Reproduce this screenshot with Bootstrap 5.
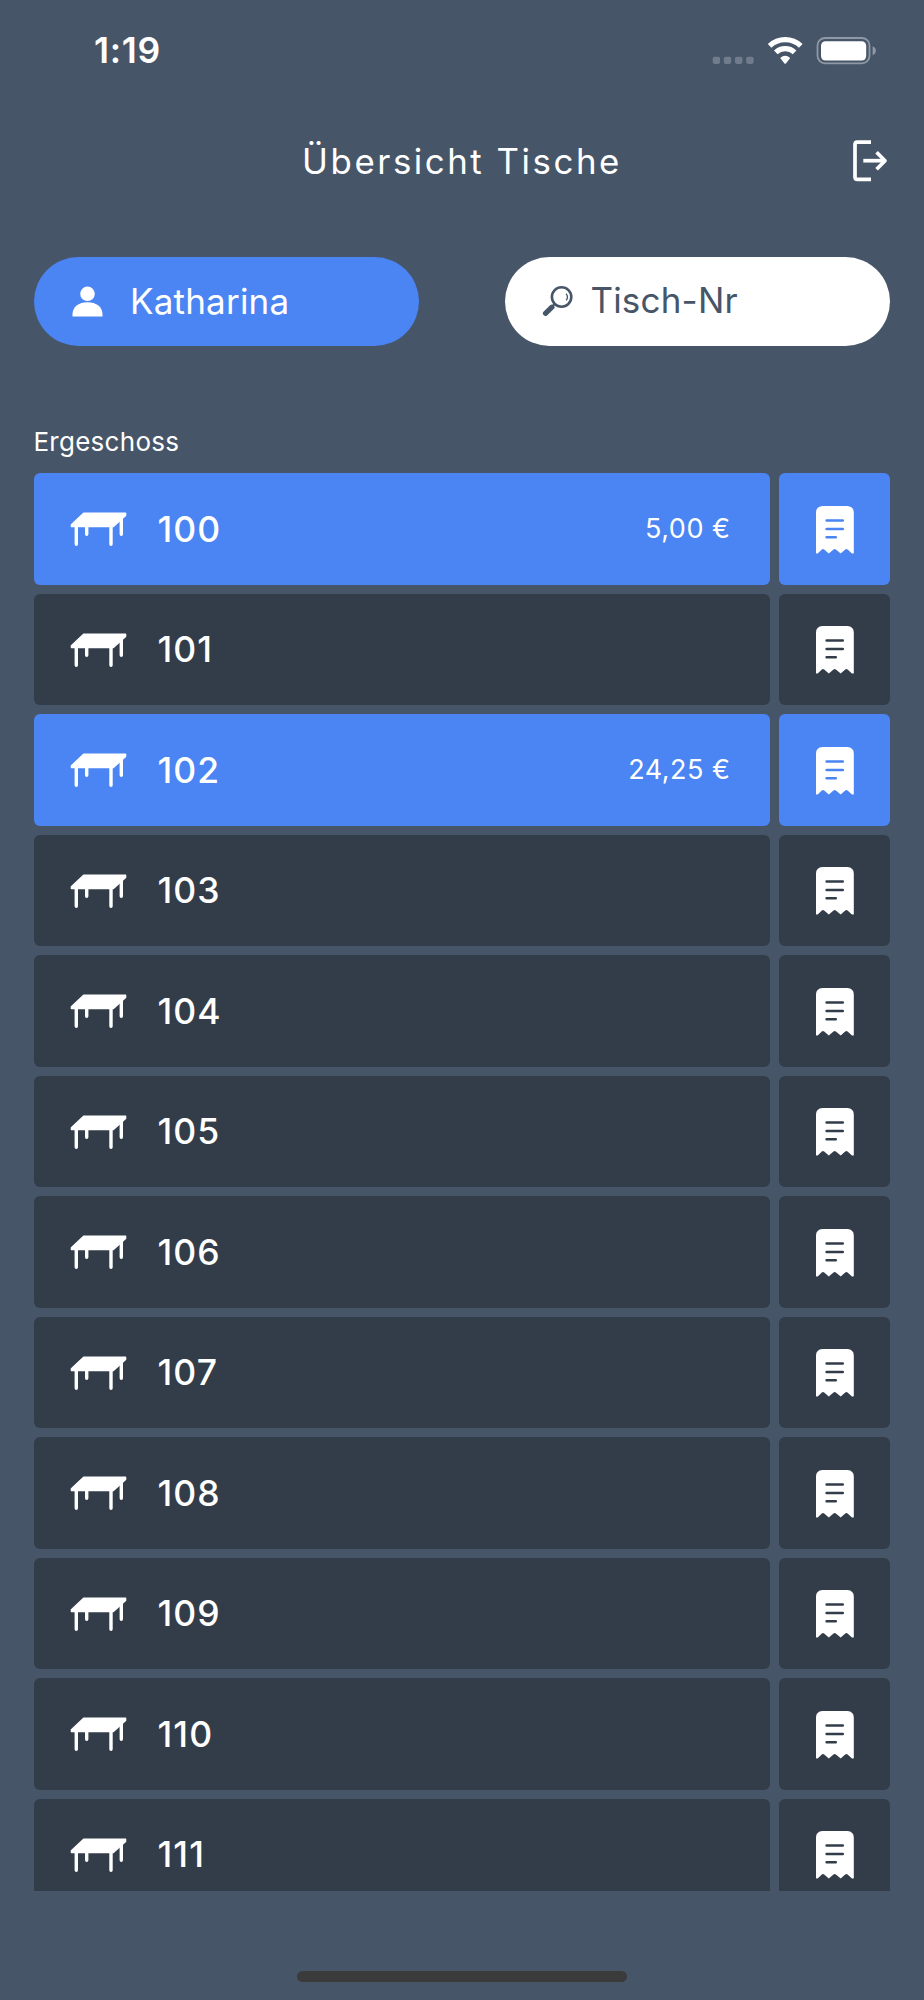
<!DOCTYPE html>
<html lang="de">
<head>
<meta charset="utf-8">
<meta name="viewport" content="width=device-width, initial-scale=1">
<title>Übersicht Tische</title>
<link href="https://cdn.jsdelivr.net/npm/bootstrap@5.3.0/dist/css/bootstrap.min.css" rel="stylesheet">
<style>
  :root { --slate: #475568; --blue: #4a85f3; --dark: #333d49; }
  body { background: var(--slate); color: #fff; font-family: Inter, "Liberation Sans", sans-serif; font-size: 27px; line-height: 1.2; }
  svg { display: block; flex: none; }
  .screen { height: 2000px; }
  .statusbar { height: 101px; padding: 0 48px 0 94px; }
  .clock { font-size: 35.5px; font-weight: 600; letter-spacing: .7px; padding-top: 2px; }
  .titlebar { height: 120px; padding: 0 33px; }
  .title { font-size: 34.8px; font-weight: 400; letter-spacing: 2.55px; line-height: 42px; }
  .controls { padding: 35.6px 34px 0; }
  .pill { width: 385px; height: 89.3px; font-size: 35px; letter-spacing: .2px; }
  .pill-user { background: var(--blue); padding-left: 37.5px; gap: 27.5px; }
  .pill-search { background: #fff; color: var(--slate); padding-left: 36.7px; gap: 16.7px; }
  .search-text { padding-bottom: 3px; }
  .floor { padding: 80.6px 33.4px 0; line-height: 32px; font-size: 26px; letter-spacing: .28px; }
  .tables { margin: 14.8px 34px 0; height: 1418px; gap: 9px; }
  .table-row { gap: 9px; flex: none; height: 111.5px; }
  .tile { background: var(--dark); border-radius: 6px; }
  .open .tile { background: var(--blue); }
  .tile-main { padding: 0 39.5px 0 36px; gap: 30.5px; }
  .tile-bill { width: 111px; padding-top: 1.5px; }
  .num { font-size: 35.5px; font-weight: 550; letter-spacing: 1.1px; padding-top: 2px; }
  .sum { letter-spacing: .5px; }
  .home { width: 330px; height: 11px; background: #3b3b3b; margin-bottom: 18px; }
</style>
</head>
<body>
<svg width="0" height="0" class="position-absolute" aria-hidden="true">
  <symbol id="i-table" viewBox="0 0 57 34">
    <path d="M13.6 1.2H55.6V3.4L43.4 14.6H1.4V12.8Z" fill="#fff" stroke="#fff" stroke-width="1.4" stroke-linejoin="round"/>
    <path d="M6.3 14V32.2M16.7 14V22.2M41 14V32.2M51.3 6V22.2" fill="none" stroke="#fff" stroke-width="3.4" stroke-linecap="round"/>
  </symbol>
  <symbol id="i-bill" viewBox="0 0 38 48">
    <path d="M6.5 0H31.3Q37.8.5 37.8 6.5V47.2Q36.5 48 35.4 47L31.6 43.5Q30.4 42.5 29.2 43.5L24.7 47.6L19.9 43.5Q18.7 42.5 17.5 43.5L12.8 47.6L8.2 43.5Q7 42.5 5.8 43.5L2.2 47Q1 48 0 47.2V6.5Q0 .5 6.5 0Z" fill="#fff"/>
    <path d="M10.6 14.4H26.8M10.6 22.9H26.8M10.6 31.2H19.8" fill="none" stroke="currentColor" stroke-width="2.5" stroke-linecap="round"/>
  </symbol>
</svg>

<div class="screen d-flex flex-column overflow-hidden">
  <div class="statusbar d-flex align-items-center justify-content-between">
    <span class="clock">1:19</span>
    <svg width="164" height="28" viewBox="712 36.5 164 28">
      <g fill="#707c8b"><rect x="712.7" y="56.2" width="7.4" height="7.2" rx="1.8"/><rect x="723.8" y="56.2" width="7.4" height="7.2" rx="1.8"/><rect x="735" y="56.2" width="7.4" height="7.2" rx="1.8"/><rect x="746.2" y="56.2" width="7.4" height="7.2" rx="1.8"/></g>
      <path d="M769.6 45.4A22.6 22.6 0 0 1 800.8 45.4M775.8 51.9A13.7 13.7 0 0 1 794.6 51.9" fill="none" stroke="#fff" stroke-width="5.2"/>
      <path d="M780.2 57.4Q785.2 53 790.2 57.4L785.9 62.9Q785.2 63.6 784.5 62.9Z" fill="#fff"/>
      <rect x="817.5" y="37.5" width="52" height="25.4" rx="7.6" fill="none" stroke="#8f99a5" stroke-width="1.8"/>
      <rect x="821" y="40.8" width="45.2" height="19.2" rx="4.5" fill="#fff"/>
      <path d="M872.6 45.8Q875.8 47 875.8 50.3T872.6 54.8Z" fill="#8f99a5"/>
    </svg>
  </div>

  <div class="titlebar d-flex align-items-center position-relative">
    <h1 class="title m-0 w-100 text-center">Übersicht Tische</h1>
    <svg class="position-absolute end-0 me-4" width="50" height="50" viewBox="850 136 50 50" fill="none" stroke="#fff" stroke-width="3.7">
      <path d="M871 142.1H857.4Q855 142.1 855 144.5V176.9Q855 179.3 857.4 179.3H871"/><path d="M863.3 160.7H885"/><path d="M876.6 152.2L885 160.7L876.6 169.2" stroke-linejoin="round"/>
    </svg>
  </div>

  <div class="controls d-flex justify-content-between">
    <div class="pill pill-user rounded-pill d-flex align-items-center">
      <svg width="31" height="31" viewBox="0 0 31 31" fill="#fff"><circle cx="15.5" cy="7.8" r="7.3"/><path d="M.5 30.6V28.5C.5 21 6.5 16.3 15.5 16.3S30.5 21 30.5 28.5V30.6Z"/></svg>
      <span class="user-name">Katharina</span>
    </div>
    <div class="pill pill-search rounded-pill d-flex align-items-center">
      <svg width="32" height="32" viewBox="541.5 286 32 32" fill="none" stroke="#475568"><circle cx="561.1" cy="298" r="9.7" stroke-width="2.6"/><path d="M554.2 305L550 309.3" stroke-width="2"/><path d="M551.4 308.2L545 314.3" stroke-width="5.2" stroke-linecap="round"/><path d="M565.6 294.6Q568.4 298 565.6 301.4" stroke-width="1.3"/></svg>
      <span class="search-text">Tisch-Nr</span>
    </div>
  </div>

  <div class="floor">Ergeschoss</div>
  <div class="tables d-flex flex-column overflow-hidden" id="tables"></div>
  <div class="home rounded-pill mt-auto mx-auto"></div>
</div>

<script>
  const sums = { 100: '5,00 €', 102: '24,25 €' };
  let rows = '';
  for (let n = 100; n <= 111; n++) {
    rows += `<div class="table-row d-flex ${sums[n] ? 'open' : ''}">
      <div class="tile tile-main d-flex align-items-center flex-grow-1">
        <svg width="57" height="34"><use href="#i-table"/></svg>
        <span class="num">${n}</span>
        ${sums[n] ? `<span class="sum ms-auto">${sums[n]}</span>` : ''}
      </div>
      <div class="tile tile-bill d-flex align-items-center justify-content-center">
        <svg width="38" height="48" style="color:${sums[n] ? 'var(--blue)' : 'var(--dark)'}"><use href="#i-bill"/></svg>
      </div>
    </div>`;
  }
  document.getElementById('tables').innerHTML = rows;
</script>
<script src="https://cdn.jsdelivr.net/npm/bootstrap@5.3.0/dist/js/bootstrap.bundle.min.js"></script>
</body>
</html>
